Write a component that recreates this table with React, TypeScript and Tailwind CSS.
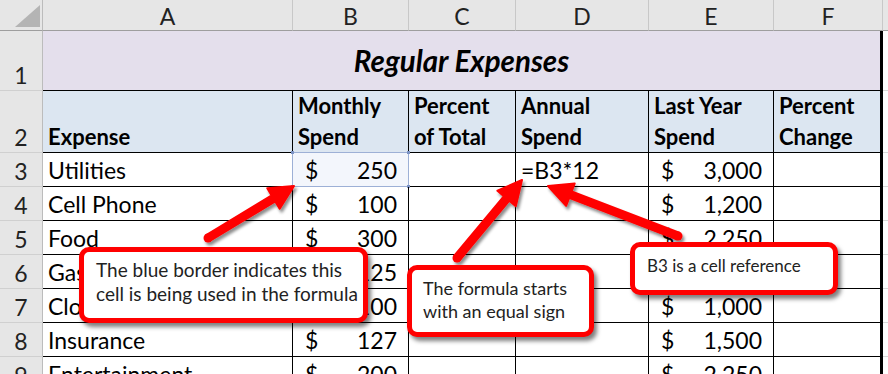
import React from 'react';

type Row = { n: number; a: string; b: string; d?: string; e: string };

const rows: Row[] = [
  { n: 3, a: 'Utilities', b: '250', d: '=B3*12', e: '3,000' },
  { n: 4, a: 'Cell Phone', b: '100', e: '1,200' },
  { n: 5, a: 'Food', b: '300', e: '2,250' },
  { n: 6, a: 'Gas', b: '125', e: '1,500' },
  { n: 7, a: 'Clothes', b: '100', e: '1,000' },
  { n: 8, a: 'Insurance', b: '127', e: '1,500' },
  { n: 9, a: 'Entertainment', b: '200', e: '2,250' },
];

const letters = ['A', 'B', 'C', 'D', 'E', 'F'];

// polygon for a fat arrow going from tail to tip
function arrow(x1: number, y1: number, x2: number, y2: number) {
  const dx = x2 - x1;
  const dy = y2 - y1;
  const len = Math.sqrt(dx * dx + dy * dy);
  const ux = dx / len;
  const uy = dy / len;
  const nx = -uy;
  const ny = ux;
  const head = 24;
  const hw = 12;
  const sw = 3.5;
  const bx = x2 - ux * head;
  const by = y2 - uy * head;
  const p = [
    [x1 + nx * sw, y1 + ny * sw],
    [bx + nx * sw, by + ny * sw],
    [bx + nx * hw, by + ny * hw],
    [x2, y2],
    [bx - nx * hw, by - ny * hw],
    [bx - nx * sw, by - ny * sw],
    [x1 - nx * sw, y1 - ny * sw],
  ];
  return p.map((q) => q.join(',')).join(' ');
}

const arrows = [
  { x1: 208, y1: 238, x2: 294, y2: 186 },
  { x1: 457, y1: 258, x2: 522, y2: 180 },
  { x1: 678, y1: 236, x2: 548, y2: 186 },
];

function Money({ v }: { v: string }) {
  return (
    <div className="flex h-full items-end justify-between pl-[12px] pr-[11px] pb-[4px] leading-[24px]">
      <span>$</span>
      <span>{v}</span>
    </div>
  );
}

export default function App() {
  const rowHead = 'flex items-end justify-center pb-[3px] leading-[24px] bg-[#e6e6e6] border-r border-b border-r-[#bcbcbc] border-b-[#d0d0d0] text-[#222]';
  const cell = 'border-r border-b border-black';

  return (
    <div className="relative w-[888px] h-[374px] overflow-hidden bg-white font-['Lato','Noto_Sans',sans-serif] text-[23px] text-black">
      <div className="grid grid-cols-[43px_250px_116px_107px_133px_125px_109px_5px] grid-rows-[31px_60px_62px_repeat(7,34px)]">
        {/* column headers */}
        <div className="relative bg-[#e6e6e6] border-r border-b border-r-[#bcbcbc] border-b-[#9e9e9e]">
          <svg className="absolute left-[15px] top-[5px]" width="25" height="22" viewBox="0 0 25 22">
            <polygon points="25,0 25,22 0,22" fill="#b4b4b4" />
          </svg>
        </div>
        {letters.map((l) => (
          <div
            key={l}
            className="flex items-end justify-center pb-[2px] leading-[24px] bg-[#e6e6e6] border-r border-b border-r-[#c8c8c8] border-b-[#9e9e9e] text-[#222]"
          >
            {l}
          </div>
        ))}
        <div className="bg-[#e6e6e6] border-b border-b-[#9e9e9e]" />

        {/* row 1 */}
        <div className={rowHead}>1</div>
        <div className="col-span-6 flex items-end justify-center pb-[13px] bg-[#e4dfec] border-b border-b-black border-r-[3px] border-r-black">
          <span className="font-bold italic text-[29.5px] leading-[32px]">Regular Expenses</span>
        </div>
        <div className="border-b border-b-[#d9d9d9]" />

        {/* row 2 */}
        <div className={rowHead}>2</div>
        {[
          ['Expense'],
          ['Monthly', 'Spend'],
          ['Percent', 'of Total'],
          ['Annual', 'Spend'],
          ['Last Year', 'Spend'],
          ['Percent', 'Change'],
        ].map((h, i) => (
          <div
            key={i}
            className={`flex flex-col justify-end pl-[5px] bg-[#dce6f1] font-bold text-[22px] leading-[31px] border-b border-black ${
              i === 5 ? 'border-r-[3px]' : 'border-r'
            }`}
          >
            {h.map((t) => (
              <span key={t}>{t}</span>
            ))}
          </div>
        ))}
        <div className="border-b border-b-[#d9d9d9]" />

        {/* data rows */}
        {rows.map((r) => (
          <React.Fragment key={r.n}>
            <div className={rowHead}>{r.n}</div>
            <div className={`${cell} flex items-end pl-[5px] pb-[4px] leading-[24px] whitespace-nowrap`}>{r.a}</div>
            <div className={`${cell} relative ${r.n === 3 ? 'bg-[#f3f6fc]' : ''}`}>
              {r.n === 3 && (
                <div className="absolute -left-px -top-px right-[-1px] bottom-[-1px] border border-[#9db0d6]">
                  <span className="absolute -left-[2px] -top-[2px] w-[3px] h-[3px] bg-[#7c93c4]" />
                  <span className="absolute -right-[2px] -top-[2px] w-[3px] h-[3px] bg-[#7c93c4]" />
                  <span className="absolute -left-[2px] -bottom-[2px] w-[3px] h-[3px] bg-[#7c93c4]" />
                  <span className="absolute -right-[2px] -bottom-[2px] w-[3px] h-[3px] bg-[#7c93c4]" />
                </div>
              )}
              <Money v={r.b} />
            </div>
            <div className={cell} />
            <div className={`${cell} flex items-end pl-[5px] pb-[4px] leading-[24px]`}>{r.d ?? ''}</div>
            <div className={cell}>
              <Money v={r.e} />
            </div>
            <div className="border-b border-black border-r-[3px]" />
            <div className="border-b border-b-[#d9d9d9]" />
          </React.Fragment>
        ))}
      </div>

      {/* arrows */}
      <svg className="absolute left-0 top-0" width="888" height="374">
        <defs>
          <filter id="sh" x="-20%" y="-20%" width="140%" height="140%">
            <feDropShadow dx="2" dy="3" stdDeviation="1.5" floodColor="#000" floodOpacity="0.45" />
          </filter>
        </defs>
        {arrows.map((a, i) => (
          <g key={i} filter="url(#sh)">
            <polygon
              points={arrow(a.x1, a.y1, a.x2, a.y2)}
              fill="#ff0000"
              stroke="#ff0000"
              strokeWidth="2"
              strokeLinejoin="round"
            />
            <circle cx={a.x1} cy={a.y1} r="4.5" fill="#ff0000" />
          </g>
        ))}
      </svg>

      {/* callouts */}
      <div className="absolute left-[79px] top-[247px] w-[289px] h-[76px] pl-[12px] pt-[6px] rounded-[10px] border-[5px] border-[#ff0000] bg-white shadow-[3px_4px_4px_rgba(0,0,0,0.5)] text-[19px] leading-[24px] text-[#222] whitespace-nowrap">
        <div>The blue border indicates this</div>
        <div>cell is being used in the formula</div>
      </div>
      <div className="absolute left-[407px] top-[265px] w-[187px] h-[72px] pl-[11px] pt-[7px] rounded-[10px] border-[5px] border-[#ff0000] bg-white shadow-[3px_4px_4px_rgba(0,0,0,0.5)] text-[18px] leading-[23px] text-[#222] whitespace-nowrap">
        <div>The formula starts</div>
        <div>with an equal sign</div>
      </div>
      <div className="absolute left-[630px] top-[242px] w-[208px] h-[53px] pl-[12px] pt-[8px] rounded-[10px] border-[5px] border-[#ff0000] bg-white shadow-[3px_4px_4px_rgba(0,0,0,0.5)] text-[17px] leading-[22px] text-[#222] whitespace-nowrap">
        <div>B3 is a cell reference</div>
      </div>
    </div>
  );
}
